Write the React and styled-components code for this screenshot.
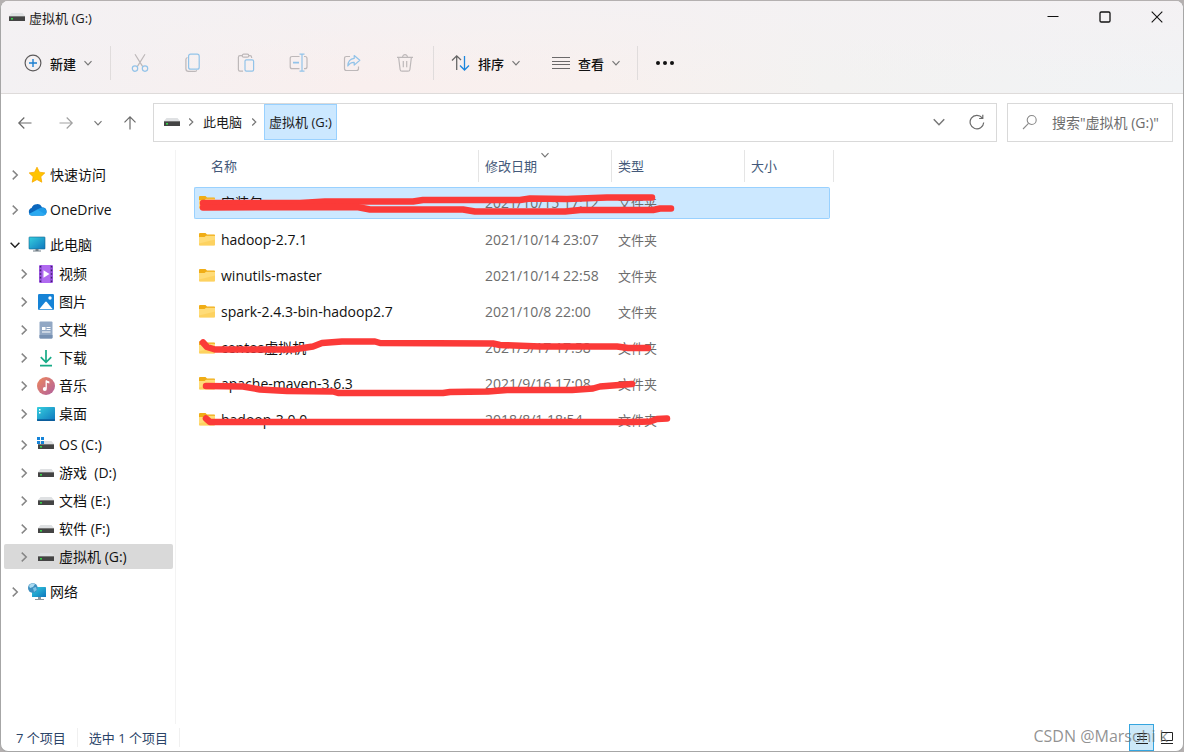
import React from 'react'
import styled, { createGlobalStyle, css } from 'styled-components'

const GlobalStyle = createGlobalStyle`
  * {
    box-sizing: border-box;
  }

  body {
    margin: 0;
    background: #b4b0b0;
  }

  body, button, input {
    font-family: 'Open Sans', 'Noto Sans CJK SC', sans-serif;
    font-size: 13px;
    color: #1b1b1b;
  }

  button {
    padding: 0;
    border: 0;
    background: none;
    white-space: nowrap;
  }

  svg {
    display: block;
    flex: none;
  }
`

const Desktop = styled.div`
  display: flex;
  min-height: 100vh;
  padding-top: 1px;
`

const Window = styled.main`
  display: flex;
  flex: 1;
  flex-direction: column;
  min-width: 0;
  overflow: hidden;
  background: #fff;
  border: 1px solid #a6a6a6;
  border-top: 0;
  border-radius: 8px;
`

const Head = styled.header`
  background: linear-gradient(180deg, rgba(244, 241, 243, 0.9), rgba(244, 241, 243, 0) 90%),
    linear-gradient(90deg, #f3f1f3 0%, #f9efee 30%, #f8f0ee 50%, #f3f2f1 70%, #f1f3f5 100%);
  border-bottom: 1px solid #dedbda;
`

const TitleBar = styled.div`
  display: flex;
  align-items: center;
  height: 32px;
  padding-left: 7px;
`

const Title = styled.h1`
  flex: 1;
  margin: 0 0 0 3px;
  font-size: 13px;
  font-weight: 400;
`

const WindowButton = styled.button`
  display: grid;
  width: 52px;
  height: 32px;
  place-items: center;
`

const Toolbar = styled.div`
  display: flex;
  align-items: center;
  height: 60px;
  padding-left: 23px;
`

const ToolButton = styled.button`
  display: flex;
  align-items: center;
  height: 34px;
  gap: 8px;
  font-weight: 500;
  color: #111;
`

const IconButton = styled.button`
  display: grid;
  width: ${({ $width }) => $width || 53}px;
  height: 34px;
  place-items: center;
`

const Divider = styled.span`
  width: 1px;
  height: 34px;
  background: #e0dcdc;
`

const ToolGroup = styled.div`
  display: flex;
  padding: 0 ${({ $pad }) => $pad}px;
  gap: ${({ $gap }) => $gap || 0}px;
`

const Navigation = styled.nav`
  display: flex;
  align-items: center;
  padding: 9px 10px 0 3px;
`

const AddressBar = styled.div`
  display: flex;
  flex: 1;
  align-items: center;
  height: 39px;
  min-width: 0;
  margin-left: 3px;
  padding: 0 0 1px 9px;
  border: 1px solid #d9d9d9;
`

const Crumb = styled.button`
  height: 36px;
  padding: 0 ${({ $active }) => ($active ? 4 : 1)}px 1px;
  color: #1b1b1b;
  border: 1px solid transparent;

  ${({ $active }) =>
    $active &&
    css`
      background: #cce8ff;
      border-color: #99d1ff;
    `}
`

const CrumbArrow = styled.span`
  display: grid;
  width: 20px;
  place-items: center;
`

const AddressActions = styled.div`
  display: flex;
  margin-left: auto;
`

const Search = styled.label`
  display: flex;
  align-items: center;
  width: 166px;
  height: 39px;
  margin-left: 10px;
  padding: 0 0 1px 14px;
  gap: 14px;
  border: 1px solid #d9d9d9;

  input {
    flex: 1;
    min-width: 0;
    padding: 0;
    font-size: 14px;
    background: none;
    border: 0;
    outline: 0;
  }

  input::placeholder {
    color: #6d6d6d;
    opacity: 1;
  }
`

const Body = styled.div`
  display: flex;
  flex: 1;
`

const Sidebar = styled.aside`
  width: 175px;
  margin-top: 8px;
  padding: 12px 2px 0 3px;
  border-right: 1px solid #f3f3f3;
`

const Tree = styled.ul`
  display: flex;
  flex-direction: column;
  margin: 0;
  padding: 0;
  gap: ${({ $gap }) => $gap || 3}px;
  list-style: none;
`

const Branch = styled.div`
  display: flex;
  flex-direction: column;
  padding-top: 1px;
  gap: 6px;
`

const TreeRow = styled.button`
  display: flex;
  align-items: center;
  width: 100%;
  height: 25px;
  padding-left: ${({ $nested }) => ($nested ? 15 : 6)}px;
  font-size: 14px;
  line-height: 24px;
  color: #111;
  white-space: pre;
  background: ${({ $selected }) => ($selected ? '#d9d9d9' : 'none')};
  border-radius: 2px;
`

const TreeIcon = styled.span`
  display: grid;
  width: 20px;
  margin: 0 3px 0 7px;
  place-items: center;
`

const Content = styled.section`
  position: relative;
  flex: 1;
  min-width: 0;
  padding: 8px 0 0 18px;
`

const FileTable = styled.table`
  width: 640px;
  table-layout: fixed;
  border-spacing: 0;
`

const HeadCell = styled.th`
  position: relative;
  height: 32px;
  padding: 0 0 2px ${({ $first }) => ($first ? 17 : 6)}px;
  font-weight: 400;
  color: #44597a;
  text-align: left;
  border-right: 1px solid #e5e5e5;
`

const SortMark = styled.span`
  position: absolute;
  top: 1px;
  left: 50%;
  transform: translateX(-50%);
`

const Spacer = styled.td`
  height: 5px;
  padding: 0;
`

const Cell = styled.td`
  height: 31px;
  padding: 0 0 0 6px;
  font-size: 14px;
  line-height: 24px;
  color: #6d6d6d;
  border: 0 solid #99d1ff;

  &:first-child {
    padding-left: 5px;
  }

  ${({ $selected }) =>
    $selected &&
    css`
      height: 32px;
      background: #cce8ff;
      border-width: 1px 0;

      &:first-child {
        padding-left: 4px;
        border-left-width: 1px;
        border-radius: 2px 0 0 2px;
      }

      &:last-child {
        border-right-width: 1px;
        border-radius: 0 2px 2px 0;
      }
    `}
`

const TypeCell = styled(Cell)`
  font-size: 13px;
`

const FileName = styled.a`
  display: flex;
  align-items: center;
  gap: 5px;
  color: #111;
  text-decoration: none;
`

const Scribbles = styled.svg`
  position: absolute;
  top: 38px;
  left: 18px;
  pointer-events: none;
`

const StatusBar = styled.footer`
  position: relative;
  display: flex;
  align-items: center;
  height: 27px;
  padding-left: 15px;
  color: #2b4468;
`

const StatusItem = styled.span`
  padding-right: 11px;
  margin-right: 11px;
  border-right: 1px solid #f0f0f0;
`

const ViewModes = styled.div`
  display: flex;
  align-self: stretch;
  margin-left: auto;
  padding-right: 4px;
`

const ViewMode = styled.button`
  display: grid;
  width: 25px;
  place-items: center;
  background: ${({ $active }) => ($active ? '#cce8f8' : 'none')};
  border: 1px solid ${({ $active }) => ($active ? '#35a5df' : 'transparent')};
`

const Watermark = styled.span`
  position: absolute;
  right: 15px;
  bottom: 4px;
  font-size: 16px;
  line-height: 22px;
  color: rgba(110, 110, 110, 0.75);
  pointer-events: none;
`

const Chevron = ({ dir = 'right', size = 8, color = '#777', width = 1.2 }) => {
  const turn = { right: 0, down: 90 }[dir]
  return (
    <svg width={size} height={size} viewBox="0 0 8 8" fill="none" stroke={color} strokeWidth={width}>
      <path d="M2.2 0.5 5.8 4 2.2 7.5" transform={`rotate(${turn} 4 4)`} />
    </svg>
  )
}

const Drive = ({ windows }) => (
  <svg width="18" height="16" viewBox="0 0 18 16">
    <path d="M3.5 4h11L17 7H1z" fill="#dfe1e3" />
    <rect x="1" y="7" width="16" height="5" rx="0.6" fill="#444" />
    <rect x="1" y="7" width="16" height="1" fill="#777" />
    <rect x="3" y="9" width="2" height="1.6" fill="#35d04a" />
    {windows && <path d="M0 0h3v3H0zM4 0h3v3H4zM0 4h3v3H0zM4 4h3v3H4z" fill="#1583d8" />}
  </svg>
)

const Folder = () => (
  <svg width="17" height="16" viewBox="0 0 17 16">
    <path d="M1 1h5.5L8 2.5h7.2q.8 0 .8.8V8H0V2q0-1 1-1z" fill="#f0ad16" />
    <path d="M0 5h5.5L7 3.8h9v8.9q0 .8-.8.8H.8q-.8 0-.8-.8z" fill="#ffdc78" />
    <path d="M0 11.5l16-4v5.2q0 .8-.8.8H.8q-.8 0-.8-.8z" fill="#fccb50" opacity="0.6" />
  </svg>
)

const Monitor = ({ globe }) => (
  <svg width="18" height="18" viewBox="0 0 18 18">
    <defs>
      <linearGradient id="screen" x1="0" y1="0" x2="1" y2="1">
        <stop offset="0" stopColor="#35cfdf" />
        <stop offset="1" stopColor="#0f76bd" />
      </linearGradient>
    </defs>
    {globe ? (
      <g>
        <rect x="4" y="4" width="14" height="10" rx="0.6" fill="url(#screen)" />
        <path d="M10 14h3v2h3v1H7v-1h3z" fill="#8b969e" />
        <circle cx="4.8" cy="5" r="4.8" fill="#3d8fc0" />
        <path d="M2 1.5Q5-.5 7 1.2L5 4 2 5 1 3z" fill="#a9daf0" />
        <path d="M5 5l3-1 .8 3L6 9z" fill="#7cc3e4" />
      </g>
    ) : (
      <g>
        <rect x="1" y="1" width="16" height="12" rx="0.6" fill="url(#screen)" stroke="#16648e" strokeWidth="0.6" />
        <path d="M7.5 13h3v1.5H13v1H5v-1h2.5z" fill="#6f7c85" />
      </g>
    )}
  </svg>
)

const Star = () => (
  <svg width="18" height="18" viewBox="0 0 18 18">
    <path
      d="M9 1.2l2.4 5 5.4.7-4 3.8 1 5.5L9 13.5l-4.8 2.7 1-5.5-4-3.8 5.4-.7z"
      fill="#ffc400"
      stroke="#f7a900"
      strokeWidth="0.8"
      strokeLinejoin="round"
    />
  </svg>
)

const Cloud = () => (
  <svg width="19" height="13" viewBox="0 0 19 13">
    <path d="M4 12.5a3.8 3.8 0 0 1-.4-7.4 5.6 5.6 0 0 1 10.5-.6A4 4 0 0 1 15 12.5z" fill="#0b67bd" />
    <path d="M9 6.5l4.500-2a4.300 4.300 0 0 1 5 4.200 3.800 3.800 0 0 1-3.600 3.800H4.300q-2 0-3.200-1.600z" fill="#1e9be8" />
    <path d="M9.8 6.8l7.800 4.700a4 4 0 0 1-2.700 1H4.300q-2 0-3.200-1.600z" fill="#2ba9f0" />
  </svg>
)

const Video = () => (
  <svg width="16" height="18" viewBox="0 0 16 18">
    <rect x="1" y="0" width="14" height="18" rx="1.2" fill="#9b55e0" />
    <path d="M4 0h8v18H4z" fill="#b06af0" />
    <path d="M2.5 1v16M13.5 1v16" stroke="#43206f" strokeWidth="1.4" strokeDasharray="1.6 2" />
    <path d="M5.5 5.2v7.6l6-3.8z" fill="#fff" />
  </svg>
)

const Picture = () => (
  <svg width="16" height="16" viewBox="0 0 16 16">
    <rect width="16" height="16" rx="1.2" fill="#1683d6" />
    <path d="M1.2 15.2 7.2 8q.8-.8 1.6 0l6 7.2z" fill="#fff" />
    <circle cx="12" cy="4" r="1.7" fill="#fff" />
  </svg>
)

const Document = () => (
  <svg width="14" height="18" viewBox="0 0 14 18">
    <rect x="0.5" y="0.5" width="13" height="17" rx="1" fill="#92a8c4" />
    <path d="M.5 14h13v2.5q0 1-1 1h-11q-1 0-1-1z" fill="#7690b2" />
    <path d="M3 6h3.5v3H3zM7.5 6h4v1h-4zM7.5 8h4v1h-4zM3 10.5h8.5v1H3z" fill="#fff" />
  </svg>
)

const Download = () => (
  <svg width="14" height="18" viewBox="0 0 14 18" fill="none" stroke="#17ab87" strokeWidth="1.7">
    <path d="M7 1v12M1.8 8.2 7 13.4l5.2-5.2M1 16.7h12" />
  </svg>
)

const Music = () => (
  <svg width="18" height="18" viewBox="0 0 18 18">
    <defs>
      <linearGradient id="disc" x1="0" y1="0" x2="1" y2="1">
        <stop offset="0" stopColor="#ee875c" />
        <stop offset="1" stopColor="#b0609e" />
      </linearGradient>
    </defs>
    <circle cx="9" cy="9" r="9" fill="url(#disc)" />
    <path d="M9.2 3.5v8" stroke="#fff" strokeWidth="1.3" />
    <path d="M9 3.2l3.4 1.4v2L9 5.5z" fill="#fff" />
    <circle cx="7.8" cy="12" r="2" fill="#fff" />
  </svg>
)

const DesktopIcon = () => (
  <svg width="18" height="14" viewBox="0 0 18 14">
    <rect width="18" height="14" rx="0.8" fill="url(#screen)" />
    <path d="M2 2h1.5v1.5H2zM2 5h1.5v1.5H2z" fill="#fff" />
    <path d="M0 12.2h18v1q0 .8-.8.8H.8q-.8 0-.8-.8z" fill="#0b5d9c" />
  </svg>
)

const line = { width: 20, height: 20, viewBox: '0 0 20 20', fill: 'none', strokeWidth: 1.2 }
const GREY = '#bdb8b9'
const BLUE = '#92c3e9'

const Cut = () => (
  <svg {...line}>
    <path d="M5 1.2l7.7 12.4M15 1.2 7.3 13.6" stroke={GREY} />
    <circle cx="5" cy="15.6" r="2.7" stroke={BLUE} />
    <circle cx="15" cy="15.6" r="2.7" stroke={BLUE} />
  </svg>
)

const Copy = () => (
  <svg {...line}>
    <path d="M4.5 4.5q-1.6.4-1.6 2v9.2q0 2.7 2.7 2.7h6.2q1.4 0 2-1.2" stroke={GREY} />
    <rect x="5.6" y="1.2" width="10.6" height="15" rx="2" stroke={BLUE} />
  </svg>
)

const Paste = () => (
  <svg {...line}>
    <path d="M7 18.2H4q-1.6 0-1.6-1.6V4.3q0-1.6 1.6-1.6h2.4M13 2.7h1q1.6 0 1.6 1.6v.7" stroke={GREY} />
    <rect x="6.2" y="1.2" width="6.6" height="3" rx="1.5" stroke={GREY} />
    <rect x="9" y="6.8" width="8.6" height="11.4" rx="1.4" stroke={BLUE} />
  </svg>
)

const Rename = () => (
  <svg {...line}>
    <path d="M10.5 3.5H3.2q-2 0-2 2v8.2q0 2 2 2h7.3M15 3.5h1q2 0 2 2v8.2q0 2-2 2h-1" stroke={GREY} />
    <path d="M10.5 1.2h5M13 1.2v17M10.5 18.2h5" stroke={BLUE} />
    <path d="M4 9.6h6" stroke={BLUE} strokeWidth="1.8" />
  </svg>
)

const Share = () => (
  <svg {...line}>
    <path d="M8 3.5H4.5q-2 0-2 2v10q0 2 2 2h10q2 0 2-2v-2" stroke={GREY} />
    <path d="M12.2 2.5l5.6 4.8-5.6 4.8V9.3q-4-.2-6.4 3.7Q6 6.2 12.2 5.4z" stroke={BLUE} strokeLinejoin="round" />
  </svg>
)

const Trash = () => (
  <svg {...line} stroke={GREY}>
    <path d="M2 4.3h16M3.6 4.3l1.5 12.2q.2 1.7 1.9 1.7h6q1.7 0 1.9-1.7l1.500-12.200M7.600 4a2.400 2.400 0 0 1 4.800 0M8.300 8v6.300M11.700 8v6.300" />
  </svg>
)

const Plus = () => (
  <svg width="18" height="18" viewBox="0 0 18 18" fill="none">
    <circle cx="9" cy="9" r="7.9" stroke="#5d5b5c" strokeWidth="1.2" />
    <path d="M9 5v8M5 9h8" stroke="#1c7fd0" strokeWidth="1.4" />
  </svg>
)

const Sort = () => (
  <svg width="19" height="18" viewBox="0 0 19 18" fill="none" strokeWidth="1.3">
    <path d="M5.7 16V2M1 6.5 5.7 1.8 10 6" stroke="#666" />
    <path d="M13.5 2v13.5M9 11.5l4.5 4.5 4.5-4.5" stroke="#1c86dd" />
  </svg>
)

const Lines = () => (
  <svg width="18" height="14" viewBox="0 0 18 14">
    <path d="M0 1.5h18M0 5.5h18M0 8.5h18M0 12.5h18" stroke="#6b696a" />
  </svg>
)

const Dots = () => (
  <svg width="20" height="6" viewBox="0 0 20 6" fill="#111">
    <circle cx="3" cy="3" r="2" />
    <circle cx="10" cy="3" r="2" />
    <circle cx="17" cy="3" r="2" />
  </svg>
)

const Arrow = ({ turn, color = '#6b6b6b' }) => (
  <svg width="16" height="16" viewBox="0 0 16 16" fill="none" stroke={color} strokeWidth="1.2">
    <path d="M14.5 8H2M7.300 2.500 1.800 8l5.500 5.500" transform={`rotate(${turn} 8 8)`} />
  </svg>
)

const Refresh = () => (
  <svg width="16" height="16" viewBox="0 0 16 16" fill="none" stroke="#6b6b6b" strokeWidth="1.2">
    <path d="M14.7 8.5a6.8 6.8 0 1 1-1.5-4.7M13.8.8v3.7h-3.7" />
  </svg>
)

const Magnifier = () => (
  <svg width="16" height="16" viewBox="0 0 16 16" fill="none" stroke="#8a8a8a" strokeWidth="1.1">
    <circle cx="9.7" cy="6" r="4.5" />
    <path d="M6.5 9.3 1 15" />
  </svg>
)

const tools = [
  ['剪切', Cut],
  ['复制', Copy],
  ['粘贴', Paste],
  ['重命名', Rename],
  ['共享', Share],
  ['删除', Trash]
]

const libraries = [
  ['视频', <Video />],
  ['图片', <Picture />],
  ['文档', <Document />],
  ['下载', <Download />],
  ['音乐', <Music />],
  ['桌面', <DesktopIcon />]
]

const drives = [
  ['OS (C:)', <Drive windows />],
  ['游戏  (D:)', <Drive />],
  ['文档 (E:)', <Drive />],
  ['软件 (F:)', <Drive />],
  ['虚拟机 (G:)', <Drive />, true]
]

const files = [
  ['安装包', '2021/10/15 17:12'],
  ['hadoop-2.7.1', '2021/10/14 23:07'],
  ['winutils-master', '2021/10/14 22:58'],
  ['spark-2.4.3-bin-hadoop2.7', '2021/10/8 22:00'],
  ['centos虚拟机', '2021/9/17 17:58'],
  ['apache-maven-3.6.3', '2021/9/16 17:08'],
  ['hadoop-3.0.0', '2018/8/1 18:54']
]

const Node = ({ label, icon, nested, selected, open }) => (
  <li>
    <TreeRow type="button" $nested={nested} $selected={selected}>
      <Chevron dir={open ? 'down' : 'right'} size={10} color={open ? '#222' : '#858585'} />
      <TreeIcon>{icon}</TreeIcon>
      {label}
    </TreeRow>
  </li>
)

const NodeList = ({ items }) => (
  <Tree>
    {items.map(([label, icon, selected]) => (
      <Node key={label} label={label} icon={icon} selected={selected} nested />
    ))}
  </Tree>
)

const App = () => (
  <Desktop>
    <GlobalStyle />
    <Window>
      <Head>
        <TitleBar>
          <Drive />
          <Title>虚拟机 (G:)</Title>
          <WindowButton type="button" aria-label="最小化">
            <svg width="12" height="12" viewBox="0 0 12 12" stroke="#111">
              <path d="M0.5 5.5h11" />
            </svg>
          </WindowButton>
          <WindowButton type="button" aria-label="最大化">
            <svg width="12" height="12" viewBox="0 0 12 12" fill="none" stroke="#111" strokeWidth="1.3">
              <rect x="1" y="1" width="10" height="10" rx="1.3" />
            </svg>
          </WindowButton>
          <WindowButton type="button" aria-label="关闭">
            <svg width="12" height="12" viewBox="0 0 12 12" stroke="#111" strokeWidth="1.1">
              <path d="M0.7 0.7l10.6 10.6M11.3 0.7 0.7 11.3" />
            </svg>
          </WindowButton>
        </TitleBar>

        <Toolbar>
          <ToolButton type="button">
            <Plus />
            新建
            <Chevron dir="down" />
          </ToolButton>
          <ToolGroup $pad={9} />
          <Divider />
          <ToolGroup $pad={2}>
            {tools.map(([label, Icon]) => (
              <IconButton key={label} type="button" aria-label={label}>
                <Icon />
              </IconButton>
            ))}
          </ToolGroup>
          <Divider />
          <ToolGroup $pad={17} $gap={32}>
            <ToolButton type="button">
              <Sort />
              排序
              <Chevron dir="down" />
            </ToolButton>
            <ToolButton type="button">
              <Lines />
              查看
              <Chevron dir="down" />
            </ToolButton>
          </ToolGroup>
          <Divider />
          <IconButton type="button" aria-label="更多">
            <Dots />
          </IconButton>
        </Toolbar>
      </Head>

      <Navigation>
        <IconButton type="button" aria-label="后退" $width={41}>
          <Arrow turn={0} />
        </IconButton>
        <IconButton type="button" aria-label="前进" $width={41}>
          <Arrow turn={180} color="#a2a2a2" />
        </IconButton>
        <IconButton type="button" aria-label="最近位置" $width={24}>
          <Chevron dir="down" />
        </IconButton>
        <IconButton type="button" aria-label="上移" $width={40}>
          <Arrow turn={90} />
        </IconButton>
        <AddressBar>
          <Drive />
          <CrumbArrow>
            <Chevron />
          </CrumbArrow>
          <Crumb type="button">此电脑</Crumb>
          <CrumbArrow>
            <Chevron />
          </CrumbArrow>
          <Crumb type="button" $active>
            虚拟机 (G:)
          </Crumb>
          <AddressActions>
            <IconButton type="button" aria-label="历史记录" $width={38}>
              <Chevron dir="down" size={12} width={1} />
            </IconButton>
            <IconButton type="button" aria-label="刷新" $width={38}>
              <Refresh />
            </IconButton>
          </AddressActions>
        </AddressBar>
        <Search>
          <Magnifier />
          <input type="text" aria-label="搜索" placeholder={'搜索"虚拟机 (G:)"'} />
        </Search>
      </Navigation>

      <Body>
        <Sidebar>
          <Tree $gap={10}>
            <Node label="快速访问" icon={<Star />} />
            <Node label="OneDrive" icon={<Cloud />} />
            <li>
              <Tree as="div">
                <Tree>
                  <Node label="此电脑" icon={<Monitor />} open />
                </Tree>
                <Branch>
                  <NodeList items={libraries} />
                  <NodeList items={drives} />
                </Branch>
              </Tree>
            </li>
            <Node label="网络" icon={<Monitor globe />} />
          </Tree>
        </Sidebar>

        <Content>
          <FileTable>
            <colgroup>
              <col style={{ width: 285 }} />
              <col style={{ width: 133 }} />
              <col style={{ width: 133 }} />
              <col style={{ width: 85 }} />
              <col style={{ width: 4 }} />
            </colgroup>
            <thead>
              <tr>
                <HeadCell $first>名称</HeadCell>
                <HeadCell>
                  修改日期
                  <SortMark>
                    <Chevron dir="down" />
                  </SortMark>
                </HeadCell>
                <HeadCell>类型</HeadCell>
                <HeadCell colSpan={2}>大小</HeadCell>
              </tr>
            </thead>
            <tbody>
              {files.map(([name, date], i) => (
                <React.Fragment key={name}>
                  <tr>
                    <Spacer colSpan={5} />
                  </tr>
                  <tr>
                    <Cell $selected={i === 0}>
                      <FileName href="#">
                        <Folder />
                        {name}
                      </FileName>
                    </Cell>
                    <Cell $selected={i === 0}>{date}</Cell>
                    <TypeCell $selected={i === 0}>文件夹</TypeCell>
                    <Cell $selected={i === 0} />
                  </tr>
                </React.Fragment>
              ))}
            </tbody>
          </FileTable>

          <Scribbles
            width="500"
            height="260"
            viewBox="194 180 500 260"
            fill="none"
            stroke="#fb3a38"
            strokeWidth="6.5"
            strokeLinecap="round"
            strokeLinejoin="round"
            aria-hidden="true"
          >
            <path d="M203 203 300 203 325 201.5 413 201.5 423 200 520 200 530 198.5 567 199 607 197.5 652 197.5" />
            <path d="M203 207.5 357 207 370 209.5 463 209.5 475 211.5 565 211.5 580 210 653 210 660 208.5 671 208.5" />
            <path d="M203 342.5 207 347 215 349.5 293 349.5 313 346.5 322 343 342 341.5 375 341.5 380 343 493 343.5 500 345 540 346.5 617 346.5 628 348 648 348" />
            <path d="M206 386 243 386.5 260 389.5 287 391 333 391.5 338 393 443 393 450 392 488 391.5 507 390 572 390 593 388.5 600 386.5 632 384" />
            <path d="M206 418.5 210 422 633 422 650 421.5 657 419 667 418.5" />
          </Scribbles>
        </Content>
      </Body>

      <StatusBar>
        <StatusItem>7 个项目</StatusItem>
        <StatusItem>选中 1 个项目</StatusItem>
        <ViewModes>
          <ViewMode type="button" aria-label="详细信息" $active>
            <svg width="14" height="14" viewBox="0 0 14 14" stroke="#222">
              <path d="M2 2.5h10M2 5.5h10M2 8.5h10M1 12.5h12" />
            </svg>
          </ViewMode>
          <ViewMode type="button" aria-label="大图标">
            <svg width="14" height="14" viewBox="0 0 14 14" fill="none" stroke="#222">
              <path d="M1.5 1.5h11v8h-11zM1 12.5h12" />
            </svg>
          </ViewMode>
        </ViewModes>
        <Watermark>CSDN @Marsohi k</Watermark>
      </StatusBar>
    </Window>
  </Desktop>
)

export default App
